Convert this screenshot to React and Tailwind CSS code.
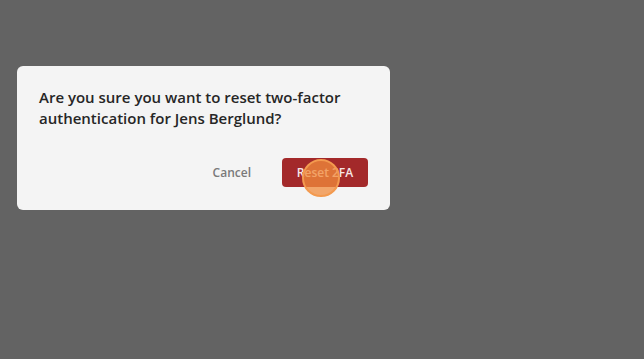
import React from 'react';

const App = () => {
  return (
    <div className="w-[644px] h-[359px] bg-[#636363] pt-[66px] pl-[17px] font-['Open_Sans',sans-serif]">
      <div className="w-[373px] h-[144px] bg-[#f4f4f4] rounded-[6px] px-[22px] pt-[21px] pb-[23px] flex flex-col justify-between">
        <p className="text-[15px] leading-[21px] font-semibold text-[#262626]">
          Are you sure you want to reset two-factor authentication for Jens Berglund?
        </p>
        <div className="flex justify-end items-center">
          <button className="h-[29px] px-[16px] mr-[15px] text-[12px] font-semibold text-[#7a7a7a]">
            Cancel
          </button>
          <div className="relative">
            <button className="h-[29px] w-[86px] rounded-[4px] bg-[#a3292a] text-[12px] font-semibold text-[#f6e6e6]">
              Reset 2FA
            </button>
            {/* tap indicator */}
            <span className="absolute left-[20px] top-[1px] w-[38px] h-[38px] rounded-full bg-[#f28c3c]/75 border-2 border-[#f39a4f]" />
          </div>
        </div>
      </div>
    </div>
  );
};

export default App;
